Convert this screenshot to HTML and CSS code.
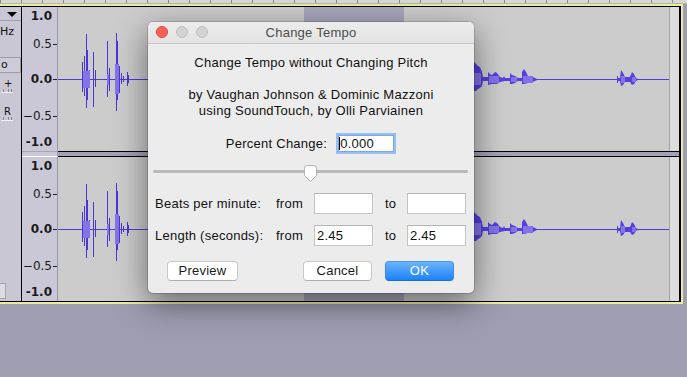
FILE: index.html
```html
<!DOCTYPE html>
<html>
<head>
<meta charset="utf-8">
<title>Change Tempo</title>
<link rel="stylesheet" href="styles.css">
</head>
<body>
<div class="app">
  <div class="topruler"></div>
  <div class="trackwrap">
    <div class="track">
      <div class="ctrl">
        <div class="ctrl-title"><span class="tri"></span></div>
        <div class="ctrl-rate">Hz</div>
        <div class="ctrl-solo">o</div>
        <div class="ctrl-gain"><span class="sl-label">+</span><span class="sl-ticks"></span></div>
        <div class="ctrl-pan"><span class="sl-label">R</span><span class="sl-ticks"></span></div>
        <div class="ctrl-spacer"></div>
        <div class="ctrl-box"></div>
      </div>
      <div class="channels">
        <div class="channel">
          <div class="vruler">
            <span class="lbl major l10">1.0</span>
            <span class="lbl l05">0.5</span><span class="tick t05"></span>
            <span class="lbl major l00">0.0</span><span class="tick t00"></span>
            <span class="lbl lm05">&minus;0.5</span><span class="tick tm05"></span>
            <span class="lbl major lm10">-1.0</span>
          </div>
          <div class="wave">
            <div class="sel"></div>
            <svg class="wsvg" width="611" height="144" viewBox="58 7 611 144">
              <path class="cline" d="M58 79.5H669"/>
              <g class="spikes">
                <path d="M82.5 62V92M84.5 56V96M86.5 34V108M87.5 50V100M89.5 70V88M93.5 52V107M95.5 70V87M107.5 41V97M109.5 68V91M116.5 33V111M117.5 41V100M119.5 66V93M121.5 73V84M123.5 76V82M127.5 72V86M128.5 75V83"/>
              </g>
              <rect class="rms" x="83" y="71" width="7" height="17"/>
              <rect class="rms" x="107" y="74" width="2" height="11"/>
              <rect class="rms" x="115" y="64" width="4" height="30"/>
              <path class="blob" d="M474 62L476 64L478 66L480 67L482 72L483 77L488 77L488 72L490 74L492 75L495 72L497 73L500 77L503 78L504 76L505 78L510 78L510 73L512 75L515 76L518 78L522 78L522 72L524 69L526 72L528 76L533 77L537 79L537 80L533 82L528 83L524 84L522 84L522 81L518 81L515 83L512 84L510 84L510 81L505 81L500 82L497 84L492 84L488 85L488 81L483 81L482 86L480 88L478 89L476 91L474 91Z"/>
              <path class="blob" d="M617 76L618 76L618 78L620 78L621 70L623 73L625 77L630 77L632 72L634 74L636 78L638 79L638 80L636 81L634 84L632 85L630 82L625 82L623 85L621 86L620 81L618 81L618 83L617 83Z"/>
              <rect class="rms" x="474" y="73" width="7" height="12"/>
              <rect class="rms" x="489" y="76" width="10" height="7"/>
              <rect class="rms" x="511" y="77" width="6" height="5"/>
              <rect class="rms" x="523" y="76" width="10" height="7"/>
              <rect class="rms" x="621" y="76" width="4" height="7"/>
              <rect class="rms" x="632" y="77" width="4" height="5"/>
            </svg>
          </div>
          <div class="rstrip"></div>
        </div>
        <div class="chsep"><div class="rs"></div><div class="band"></div></div>
        <div class="channel">
          <div class="vruler">
            <span class="lbl major l10">1.0</span>
            <span class="lbl l05">0.5</span><span class="tick t05"></span>
            <span class="lbl major l00">0.0</span><span class="tick t00"></span>
            <span class="lbl lm05">&minus;0.5</span><span class="tick tm05"></span>
            <span class="lbl major lm10">-1.0</span>
          </div>
          <div class="wave">
            <div class="sel"></div>
            <svg class="wsvg" width="611" height="144" viewBox="58 7 611 144">
              <path class="cline" d="M58 79.5H669"/>
              <g class="spikes">
                <path d="M82.5 62V92M84.5 56V96M86.5 34V108M87.5 50V100M89.5 70V88M93.5 52V107M95.5 70V87M107.5 41V97M109.5 68V91M116.5 33V111M117.5 41V100M119.5 66V93M121.5 73V84M123.5 76V82M127.5 72V86M128.5 75V83"/>
              </g>
              <rect class="rms" x="83" y="71" width="7" height="17"/>
              <rect class="rms" x="107" y="74" width="2" height="11"/>
              <rect class="rms" x="115" y="64" width="4" height="30"/>
              <path class="blob" d="M474 62L476 64L478 66L480 67L482 72L483 77L488 77L488 72L490 74L492 75L495 72L497 73L500 77L503 78L504 76L505 78L510 78L510 73L512 75L515 76L518 78L522 78L522 72L524 69L526 72L528 76L533 77L537 79L537 80L533 82L528 83L524 84L522 84L522 81L518 81L515 83L512 84L510 84L510 81L505 81L500 82L497 84L492 84L488 85L488 81L483 81L482 86L480 88L478 89L476 91L474 91Z"/>
              <path class="blob" d="M617 76L618 76L618 78L620 78L621 70L623 73L625 77L630 77L632 72L634 74L636 78L638 79L638 80L636 81L634 84L632 85L630 82L625 82L623 85L621 86L620 81L618 81L618 83L617 83Z"/>
              <rect class="rms" x="474" y="73" width="7" height="12"/>
              <rect class="rms" x="489" y="76" width="10" height="7"/>
              <rect class="rms" x="511" y="77" width="6" height="5"/>
              <rect class="rms" x="523" y="76" width="10" height="7"/>
              <rect class="rms" x="621" y="76" width="4" height="7"/>
              <rect class="rms" x="632" y="77" width="4" height="5"/>
            </svg>
          </div>
          <div class="rstrip"></div>
        </div>
      </div>
    </div>
  </div>

  <div class="dialog">
    <div class="titlebar">
      <div class="lights"><span class="light red"></span><span class="light"></span><span class="light"></span></div>
      <div class="title">Change Tempo</div>
    </div>
    <div class="dbody">
      <p class="heading">Change Tempo without Changing Pitch</p>
      <p class="authors">by Vaughan Johnson &amp; Dominic Mazzoni<br>using SoundTouch, by Olli Parviainen</p>
      <div class="pct">
        <span class="pct-label">Percent Change:</span>
        <div class="field focus"><span class="caret"></span>0.000</div>
      </div>
      <div class="slider">
        <div class="strack"></div>
        <svg class="thumb" width="15" height="18" viewBox="0 0 15 18">
          <path d="M1.5 3.5Q1.5 0.5 4.5 0.5L10.5 0.5Q13.5 0.5 13.5 3.5L13.5 10.5L7.5 16.5L1.5 10.5Z" fill="#fff" stroke="#b4b4b4" stroke-width="1"/>
        </svg>
      </div>
      <div class="rows">
        <span class="rlabel">Beats per minute:</span><span>from</span><div class="field"></div><span class="to">to</span><div class="field"></div>
        <span class="rlabel">Length (seconds):</span><span>from</span><div class="field">2.45</div><span class="to">to</span><div class="field">2.45</div>
      </div>
      <div class="buttons">
        <button class="btn preview">Preview</button>
        <span class="bspacer"></span>
        <button class="btn cancel">Cancel</button>
        <button class="btn ok">OK</button>
      </div>
    </div>
  </div>
</div>
</body>
</html>
```

FILE: styles.css
```css
* { box-sizing: border-box; }
html, body { margin: 0; padding: 0; }
body {
  width: 687px;
  height: 377px;
  overflow: hidden;
  background: #9f9eb1;
  font-family: "Liberation Sans", Arial, sans-serif;
}
.app {
  position: relative;
  width: 687px;
  height: 377px;
  background: #9f9eb1;
}

/* top ruler strip */
.topruler {
  height: 4px;
  background-color: #d8d8d8;
  background-image: repeating-linear-gradient(90deg, #8c8c8c 0 1px, transparent 1px 21px);
  background-size: 100% 3px;
  background-repeat: no-repeat;
  border-bottom: 1px solid #b8b8a0;
}

/* track */
.trackwrap {
  width: 683px;
  background: #ecec9e;
  padding: 2px 2px 2px 0;
}
.track {
  display: flex;
  height: 296px;
  border-top: 1px solid #000;
  border-bottom: 1px solid #000;
  border-right: 2px solid #000;
}
.ctrl {
  width: 22px;
  background: #c9c7d4;
  border-right: 1px solid #000;
  display: flex;
  flex-direction: column;
  font-family: "DejaVu Sans", sans-serif;
  font-size: 11px;
  color: #111;
  overflow: hidden;
}
.ctrl-title {
  height: 14px;
  padding: 5px 0 0 7px;
  border-bottom: 1px solid #a09eae;
}
.tri {
  display: block;
  width: 0;
  height: 0;
  border-left: 5px solid transparent;
  border-right: 5px solid transparent;
  border-top: 5px solid #000;
}
.ctrl-rate {
  margin-top: 6px;
  line-height: 10px;
  height: 10px;
  white-space: nowrap;
}
.ctrl-solo {
  margin-top: 20px;
  height: 16px;
  border-top: 1px solid #9e9cab;
  border-bottom: 1px solid #9e9cab;
  border-right: 1px solid #9e9cab;
  line-height: 13px;
  padding-left: 1px;
  background: #cdcbd8;
}
.ctrl-gain, .ctrl-pan {
  display: flex;
  flex-direction: column;
  align-items: flex-start;
}
.ctrl-gain { margin-top: 6px; }
.ctrl-pan { margin-top: 14px; }
.sl-label {
  line-height: 9px;
  height: 9px;
  padding-left: 4px;
  font-size: 10px;
}
.sl-ticks {
  display: block;
  margin-top: 1px;
  margin-left: 1px;
  width: 12px;
  height: 4px;
  background-image:
    linear-gradient(#f4f4f4, #f4f4f4),
    linear-gradient(#8a8a8a, #8a8a8a),
    linear-gradient(#8a8a8a, #8a8a8a),
    linear-gradient(#8a8a8a, #8a8a8a);
  background-size: 12px 1px, 1px 3px, 1px 3px, 1px 3px;
  background-position: 0 3px, 2px 0, 7px 0, 10px 0;
  background-repeat: no-repeat;
}
.ctrl-spacer { flex: 1; }
.ctrl-box {
  width: 6px;
  height: 16px;
  margin-bottom: 2px;
  background: #dcdce2;
  border: 1px solid #a6a6b0;
  border-left: none;
}

.channels {
  width: 657px;
  display: flex;
  flex-direction: column;
}
.channel {
  display: flex;
  height: 144px;
}
.vruler {
  position: relative;
  width: 36px;
  background: #cac8d6;
  border-right: 1px solid #9a98a8;
  font-family: "DejaVu Sans", sans-serif;
  font-size: 12px;
  color: #1a1a1a;
}
.lbl {
  position: absolute;
  right: 5px;
  line-height: 12px;
  white-space: nowrap;
}
.lbl.major { font-weight: bold; font-size: 12px; }
.l10 { top: 3px; }
.l05 { top: 31px; }
.l00 { top: 66px; }
.lm05 { top: 103px; }
.lm10 { top: 129px; }
.tick {
  position: absolute;
  right: 0;
  width: 4px;
  height: 1px;
  background: #222;
}
.t05 { top: 37px; }
.t00 { top: 72px; }
.tm05 { top: 109px; }

.wave {
  position: relative;
  width: 611px;
  background: #cccccc;
  overflow: hidden;
}
.sel {
  position: absolute;
  left: 246px;
  top: 0;
  width: 100px;
  height: 100%;
  background: #a8a6bb;
}
.wsvg {
  position: relative;
  display: block;
}
.cline { stroke: #4d3ed6; stroke-width: 1; fill: none; }
.spikes path { stroke: #4a35da; stroke-width: 1; fill: none; }
.rms { fill: #8274e8; }
.blob { fill: #5341dc; }

.rstrip {
  width: 10px;
  background: #dddddd;
  border-left: 1px solid #a3a3a3;
}
.chsep {
  display: flex;
  height: 6px;
}
.chsep .rs {
  width: 36px;
  background: #cac8d6;
  border-top: 1px solid #a6a5b4;
  border-bottom: 1px solid #ffffff;
  border-right: 1px solid #9a98a8;
}
.chsep .band {
  flex: 1;
  background: #a2a1b6;
  border-top: 1px solid #000;
  border-bottom: 1px solid #000;
}

/* dialog */
.dialog {
  position: absolute;
  left: 148px;
  top: 22px;
  width: 326px;
  height: 271px;
  background: #ececec;
  border-radius: 5px;
  box-shadow: 0 0 0 1px rgba(0,0,0,0.14), 0 10px 32px rgba(0,0,0,0.5);
  overflow: hidden;
  color: #111;
  font-size: 13px;
  letter-spacing: 0.25px;
}
.titlebar {
  position: relative;
  height: 22px;
  background: linear-gradient(#ececec, #e3e3e3);
  border-bottom: 1px solid #c7c7c7;
  display: flex;
  align-items: center;
  justify-content: center;
}
.title {
  color: #4c4c4c;
  line-height: 21px;
}
.lights {
  position: absolute;
  left: 8px;
  top: 4px;
  display: flex;
  gap: 8px;
}
.light {
  width: 12px;
  height: 12px;
  border-radius: 50%;
  background: #d2d2d2;
  border: 1px solid #c0c0c0;
}
.light.red {
  background: #fc5f57;
  border-color: #de4640;
}
.dbody {
  padding-top: 11px;
}
.heading {
  margin: 0;
  text-align: center;
  line-height: 16px;
}
.authors {
  margin: 16px 0 0;
  text-align: center;
  line-height: 16px;
}
.pct {
  margin-top: 14px;
  height: 21px;
  display: flex;
  justify-content: center;
  align-items: center;
  gap: 9px;
}
.field {
  background: #fff;
  border: 1px solid #c4c4c4;
  border-top-color: #b4b4b4;
  height: 21px;
  line-height: 19px;
  padding-left: 2px;
  white-space: nowrap;
}
.field.focus {
  width: 56px;
  height: 17px;
  margin: 2px;
  border-color: #79a8e8;
  box-shadow: 0 0 0 2px #97bff2;
  line-height: 15px;
  padding-left: 0;
  display: flex;
  align-items: center;
}
.caret {
  display: block;
  width: 1px;
  height: 13px;
  background: #000;
  margin-right: 0;
}
.slider {
  margin: 11px 6px 0 5px;
  height: 18px;
  display: grid;
}
.strack {
  grid-area: 1 / 1;
  height: 3px;
  margin-top: 5px;
  background: #b9b9b9;
  border-radius: 2px;
}
.thumb {
  grid-area: 1 / 1;
  justify-self: center;
  display: block;
  filter: drop-shadow(0 0.5px 0.5px rgba(0,0,0,0.15));
}
.rows {
  margin: 10px 0 0 7px;
  display: grid;
  grid-template-columns: 121px 38px 59px 34px 59px;
  row-gap: 11px;
  align-items: center;
}
.rows .to { padding-left: 12px; }
.buttons {
  margin: 15px 20px 0 19px;
  display: flex;
  gap: 13px;
}
.bspacer { flex: 1; }
.btn {
  height: 20px;
  width: 69px;
  padding: 0;
  font-family: "Liberation Sans", Arial, sans-serif;
  font-size: 13px;
  letter-spacing: 0.25px;
  color: #1a1a1a;
  background: #fff;
  border: 1px solid #c8c8c8;
  border-bottom-color: #b0b0b0;
  border-radius: 4px;
  line-height: 18px;
}
.btn.preview { width: 71px; }
.btn.ok {
  color: #fff;
  background: linear-gradient(#6cb3fb, #1a83fb);
  border-color: #4b98ee #3a8ae8 #1f6fd6;
}
```
